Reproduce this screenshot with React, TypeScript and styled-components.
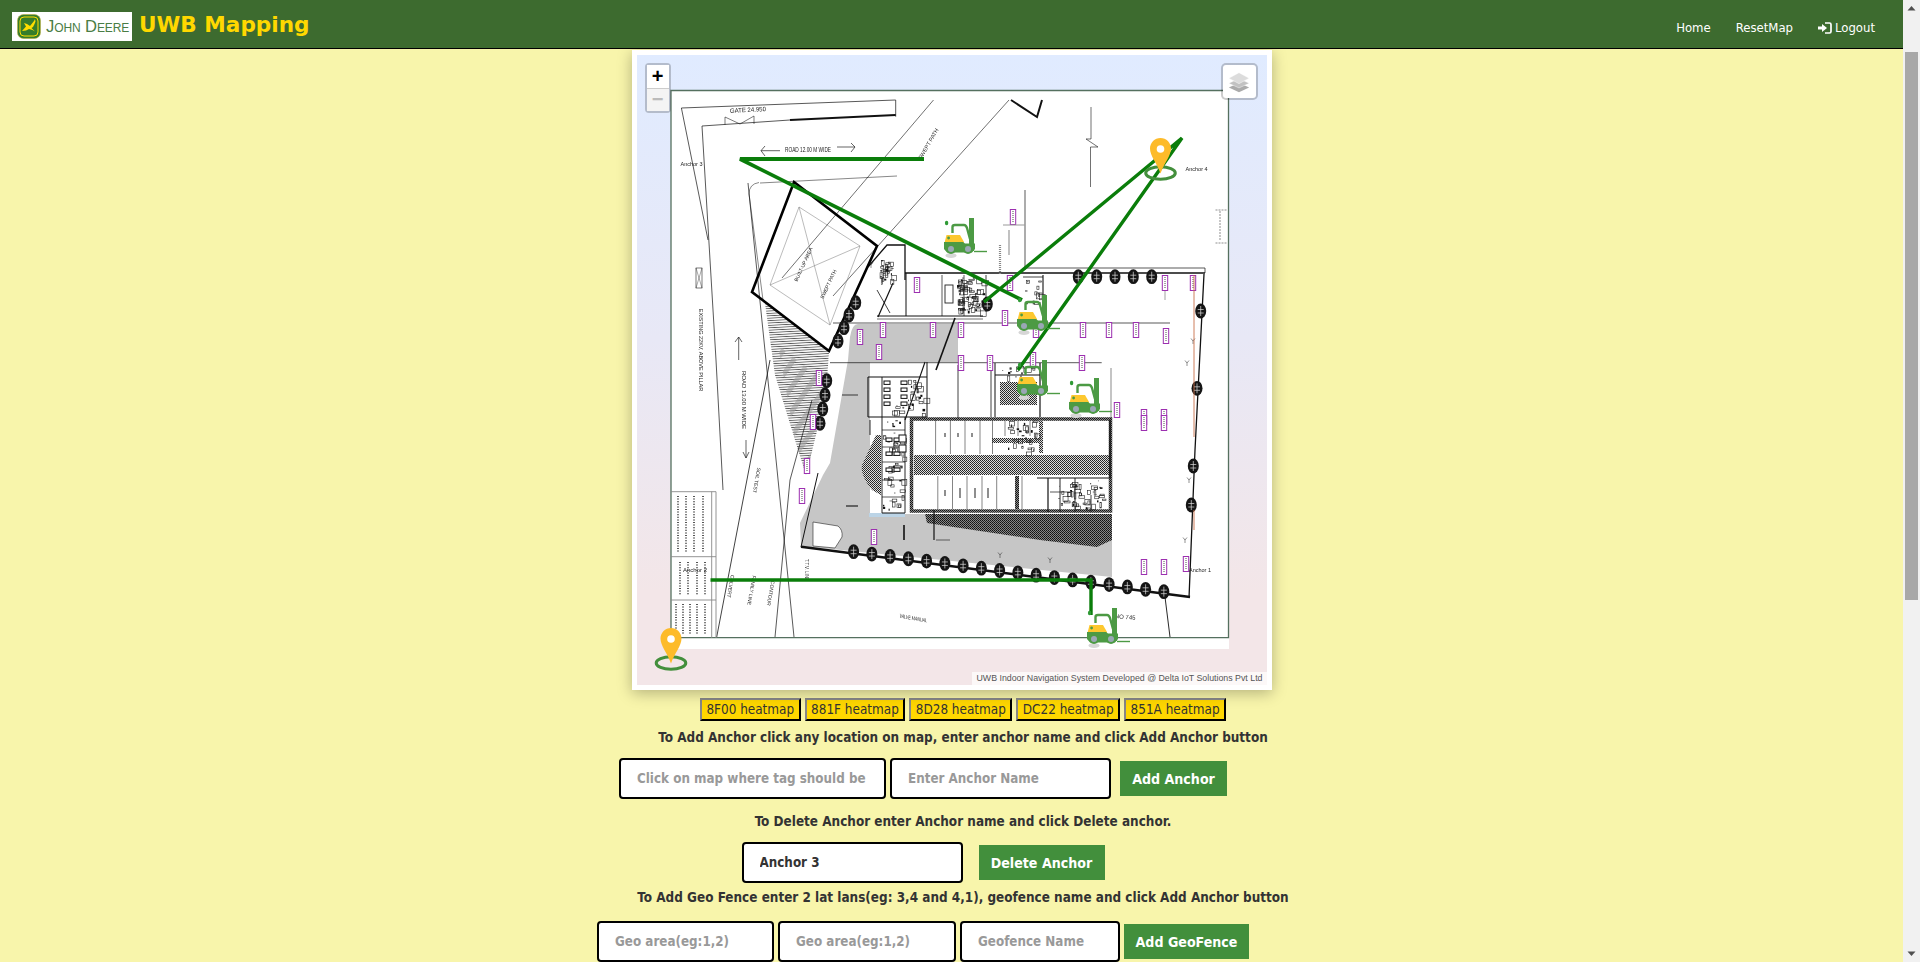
import React from "react";
import styled, { createGlobalStyle } from "styled-components";

const Global = createGlobalStyle`
  body { margin: 0; padding-right: 17px; background: #f8f5ab; font-family: "DejaVu Sans Condensed", "DejaVu Sans", sans-serif; color: #333; }
`;

const Scrollbar = styled.div`
  position: fixed; top: 0; right: 0; bottom: 0; width: 17px; z-index: 20; background: #f1f1f1;
  display: flex; flex-direction: column; align-items: center;
`;
const ScrollThumb = styled.div`
  width: 13px; height: 548px; margin-top: 35px; background: #a8a8a8;
`;
const ScrollArrow = styled.svg<{ $end?: boolean }>`
  display: block; width: 17px; height: 17px; flex: none; margin-top: ${p => (p.$end ? "auto" : "0")};
`;

const Nav = styled.nav`
  position: fixed; top: 0; left: 0; right: 17px; z-index: 10;
  height: 48px; border-bottom: 1px solid #000; background: #3d6b2f;
  display: flex; align-items: center; padding: 0 28px 0 12px;
`;
const Logo = styled.div`
  width: 120px; height: 29px; background: #fff; display: flex; align-items: center; gap: 5px; padding: 0 0 0 5px; box-sizing: border-box; margin-top: 5px;
`;
const LogoText = styled.span`
  font: 400 16.6px "Liberation Sans", sans-serif; font-variant: small-caps; color: #4a7d45; white-space: nowrap; letter-spacing: -0.1px;
`;
const Title = styled.h1`
  margin: 0 0 0 7px; font: 700 21.6px "DejaVu Sans", sans-serif; color: #ffd800;
`;
const NavLinks = styled.div`
  margin-left: auto; display: flex; gap: 25px; align-items: center; padding-top: 7px;
`;
const NavLink = styled.a`
  color: #fff; font-size: 13px; display: flex; align-items: center; gap: 3px;
`;

const Main = styled.main`
  box-sizing: border-box; min-height: 1568px; padding-top: 50px; display: flex; flex-direction: column; align-items: center;
`;
const MapCard = styled.div`
  position: relative; width: 630px; height: 630px; border: 5px solid #fff; box-shadow: 0 3px 14px rgba(0,0,0,.28);
  background: linear-gradient(#e0ebff, #e8e8f6 45%, #f3e6e8 85%); overflow: hidden;
`;
const MapSvg = styled.svg`
  display: block; width: 630px; height: 630px;
`;
const Plan = styled.g`
  filter: blur(0.35px);
`;
const ZoomBox = styled.div`
  position: absolute; left: 8px; top: 8px; width: 22px; border: 2px solid rgba(0,0,0,.2); border-radius: 4px; background: #fff; background-clip: padding-box;
`;
const ZoomBtn = styled.div<{ $off?: boolean }>`
  height: 22.5px; display: flex; align-items: center; justify-content: center; font: 700 20px "Liberation Sans", sans-serif;
  color: ${p => (p.$off ? "#bbb" : "#000")}; background: ${p => (p.$off ? "#f4f4f4" : "#fff")};
  border-top: ${p => (p.$off ? "1px solid #ccc" : "none")};
`;
const LayerBox = styled.div`
  position: absolute; right: 9px; top: 8px; width: 33px; height: 33px; border: 2px solid rgba(0,0,0,.2); border-radius: 5px; background: #fff; background-clip: padding-box;
  display: flex; align-items: center; justify-content: center;
`;
const Attribution = styled.div`
  position: absolute; right: 0; bottom: 0; padding: 0 4px; background: rgba(255,255,255,.7); color: #555;
  font: 8.8px/13px "Liberation Sans", sans-serif; white-space: nowrap;
`;

const HeatRow = styled.div`
  display: flex; gap: 4px; margin-top: 8px; padding-left: 23px;
`;
const HeatBtn = styled.button`
  height: 23px; padding: 0 4.5px; background: #ffd700; border: 2px outset #333; color: #333; font: 13.4px "DejaVu Sans Condensed", "DejaVu Sans", sans-serif; white-space: nowrap;
`;
const Hint = styled.p<{ $top: number }>`
  margin: ${p => p.$top}px 0 0; padding-left: 23px; height: 20px; line-height: 20px; font-weight: 700; font-size: 13.42px; white-space: nowrap;
`;
const FormRow = styled.div<{ $top: number; $gap: number }>`
  display: flex; align-items: center; gap: ${p => p.$gap}px; margin-top: ${p => p.$top}px; padding-right: 57px;
`;
const Field = styled.input<{ $w: number }>`
  box-sizing: border-box; width: ${p => p.$w}px; height: 41px; padding: 0 16px 1px; background: #fff; border: 2px solid #000; border-radius: 4px; outline: none;
  font: 700 13.3px "DejaVu Sans Condensed", "DejaVu Sans", sans-serif; color: #333;
  &::placeholder { color: #999; }
`;
const Action = styled.button<{ $w: number; $left: number }>`
  box-sizing: border-box; width: ${p => p.$w}px; height: 35px; margin-left: ${p => p.$left}px; padding: 0; border: none; background: #428f3c; color: #fff;
  font: 700 14.1px "DejaVu Sans Condensed", "DejaVu Sans", sans-serif;
`;

const ln = "#111";
type P = number[];
const pts = (a: P) => a.join(" ");
const black: [P, number][] = [
  [[681.4,108,895.7,100,895.7,116.7], .7],
  [[895.7,115,790,120], 1.8],
  [[790,120,702,126,716,360,723,490], .7],
  [[681.4,108,708,240], .7],
  [[933.5,100,782,278], .6],
  [[1009,100,833,296], .6],
  [[1011,100,1037,117,1042,100], 2],
  [[1091,107,1091,139,1086,139,1098,147,1090.5,147,1090.5,187], .6],
  [[1025,190,1025,270], .7],
  [[748,183,794,637], .7],
  [[716.7,637,770,360], .8],
  [[775,637,790,480,812,400], .7],
  [[760,183,897,176], .5],
  [[868,267,887,245,905,245,905,280], 1.3],
  [[877,290,890,313], .8],
  [[893,283,878,317], 1.2],
  [[877,316,983,316], 1],
  [[877,319,983,319], .6],
  [[905,273,1205,273], 1.6],
  [[1025,268,1205,268,1205,273], .7],
  [[1204,274,1195,450,1189,598], 1.3],
  [[801,546.7,1190,597], 2.6],
  [[818,473,801,547], 1],
  [[833,323,1170,323], .7],
  [[830,362.7,1101.7,362.7], .7],
  [[942,275,942,316], .7],
  [[906,273,906,316], 1],
  [[964,275,964,316], .7],
  [[986,275,986,312], .8],
  [[1043,275,1043,297], 1.1],
  [[1023,277,1043,277], .8],
  [[1040,363,1040,417], 1.2],
  [[995,375,1040,375], 1.2],
  [[995,363,995,417], 1],
  [[1165,275,1165,300], .4],
  [[1111,368,1111,420], .5],
  [[1165,597,1170,637], .9],
  [[925,362,905,420], 1.1],
  [[955,318,936,370], 1.6],
  [[868,377,927,377], 1.2],
  [[868,417,927,417], 1.2],
  [[868,377,868,417], 1.1],
  [[927,362,927,417], 1],
  [[958,365,958,418], .8],
  [[991,362,991,417], .8],
  [[882,377,882,513], .9],
  [[870,420,870,435], .9],
  [[882,513,905,513], 1],
  [[905,417,905,513], .9],
  [[934,510,934,540], 1.2],
  [[904,525,904,540], 1.6],
  [[1048,478,1048,512], 1.2],
  [[1060,478,1060,512], .9],
  [[1075,478,1075,512], .9],
  [[1110,420,1110,478], 1.4],
  [[1037,478,1110,478], 1],
  [[1050,492,1070,492], .7],
  [[1091,495,1091,512], .8],
  [[882,430,905,430], .7],
  [[882,447,905,447], .7],
  [[882,462,905,462], .7],
  [[882,480,905,480], .7],
  [[882,497,905,497], .7],
  [[842,395,858,395], .8],
  [[846,506,858,506], 1.1],
  [[936,540,950,540], .6],
];
const gates: [number, number][] = [[871,265],[1193,341],[1189,480],[1185,540],[1187,363],[1000,555],[1050,560]];
const trees: [number, number][] = [
  [855.7,302.7],[849,315],[844,327.7],[838,341],[826.7,380.7],[825,395],[822.7,409],[820,423.3],
  ...Array.from({ length: 18 }, (_, i) => [853.6 + i * 18.25, 551.7 + i * 2.35] as [number, number]),
  [1078.3,276.7],[1096.7,276.7],[1115,276.7],[1133.3,276.7],[1151.7,276.7],
  [1200.7,311],[1197,388.3],[1193.3,466],[1191.3,505],[987.3,304],
];
const tags: [number, number][] = [
  [1013,217],[917,285],[933,330],[961,330],[1005,318],[1010,283],[1036,330],[1083,330],[1109,330],[1136,330],
  [961,363],[990,363],[1082,363],[1117,410],[1144,417],[1164,417],[1033,360],[1165,283],[1193,283],[1166,336],
  [860,337],[883,330],[879,352],[819,378],[813,422],[807,466],[802,496],[874,537],
  [1144,567],[1164,567],[1186,564],[1144,423],[1164,423],
];
const forks: [number, number][] = [[944,218],[1017,295],[1017,360],[1069,378],[1087,608]];
const chairs: [number, number][] = [
  [884,381],[901,381],[884,388],[901,388],[884,395],[901,395],[884,402],[901,402],
  [886,438],[886,452],[886,468],[894,438],[894,452],[894,468],
];

function cluster(x: number, y: number, w: number, h: number, n: number, seed: number) {
  let s = seed;
  const r = () => ((s = (s * 16807) % 2147483647) / 2147483647);
  return Array.from({ length: n }, (_, i) => {
    const rx = x + r() * w, ry = y + r() * h, rw = 1 + r() * 5, rh = 1 + r() * 5;
    return i % 3 === 0
      ? <rect key={i} x={rx} y={ry} width={rw / 2.2} height={rh / 2.2} fill="#111" />
      : <rect key={i} x={rx} y={ry} width={rw} height={rh} fill="none" stroke="#222" strokeWidth=".6" />;
  });
}
const TinyText = styled.text`
  font-family: "Liberation Sans", sans-serif; fill: #222;
`;
const Note = ({ x, y, r = 0, s = 6, c, len }: { x: number; y: number; r?: number; s?: number; c: string; len?: number }) => (
  <TinyText x={x} y={y} fontSize={s} textAnchor="middle" textLength={len} lengthAdjust={len ? "spacingAndGlyphs" : undefined} transform={r ? `rotate(${r} ${x} ${y})` : undefined}>{c}</TinyText>
);

const Floorplan = () => (
  <Plan>
    <rect x="671" y="90" width="558" height="559" fill="#fff" />
    <path d="M671 90.5H1228.5V637.7H671Z" fill="none" stroke="#55705f" strokeWidth="1.3" />
    <path d="M858 324H958V362H870V514H1112V577L801 546L800 523L823 475L830 463L848 360L850 337Q852 324 858 324Z" fill="#c6c6c6" />
    <path d="M813 522L838 526Q843 530 842 537L835 548L813 546Z" fill="#fff" stroke="#222" strokeWidth=".6" />
    <path d="M765 303L829 351L826 395L806 475L795 440L775 375Z" fill="url(#stripes)" />
    <path d="M778 345L829 385L826 395L806 475L795 440Z" fill="url(#bands)" />
    <path d="M876 435L881 435V495L872 490Q860 475 862 465Z" fill="url(#dither)" />
    <path d="M925 514H1112V540L1097 547L1040 540L927 523Z" fill="url(#darkdither)" />
    <rect x="914" y="455" width="196" height="20" fill="url(#dither)" />
    <rect x="1000" y="382" width="37" height="23" fill="url(#dither)" />
    <rect x="992" y="438" width="48" height="5" fill="url(#dither)" />
    <rect x="1039" y="421" width="4" height="32" fill="url(#dither)" />
    <rect x="1015" y="476" width="4" height="33" fill="url(#darkdither)" />
    <rect x="911.5" y="419" width="199" height="92" fill="none" stroke="url(#darkdither)" strokeWidth="3.5" />
    <rect x="869" y="513" width="36" height="4" fill="#bcd4e6" />
    <path d="M935.6 420V454M950.4 420V454M965 420V454M980 420V454M992.5 420V454M1005 421V436M1018 421V436M1030 421V436M937.8 476V509M952.5 476V509M967 476V509M982 476V509M996.7 476V509M1022 476V509" stroke="#333" strokeWidth=".6" />
    <path d="M945 433V437M958 433V437M972 433V437M945 490V496M960 488V498M975 488V498M988 488V498" stroke="#444" strokeWidth="1.2" />
    {black.map(([p, w], i) => <polyline key={i} points={pts(p)} fill="none" stroke={ln} strokeWidth={w} />)}
    <polygon points="794,182 877,246 829,351 752,292" fill="none" stroke="#000" strokeWidth="2.6" />
    <path d="M799 207L860 246L830 325L770 285ZM799 207L830 325M860 246L770 285" fill="none" stroke="#777" strokeWidth=".5" />
    <path d="M759 182.5Q749 184 749 194L763 300" fill="none" stroke="#111" strokeWidth=".5" />
    {cluster(957, 277, 26, 34, 80, 17)}
    {cluster(880, 260, 12, 20, 28, 29)}
    {cluster(1008, 420, 28, 32, 30, 113)}
    {cluster(1058, 480, 46, 28, 50, 157)}
    {cluster(1025, 280, 15, 24, 14, 201)}
    {cluster(883, 405, 20, 105, 50, 91)}
    {cluster(908, 378, 16, 36, 20, 73)}
    {cluster(1002, 365, 34, 12, 14, 277)}
    {chairs.map(([x, y], i) => <rect key={i} x={x} y={y} width="6" height="3.4" fill="#fff" stroke="#111" strokeWidth="1" />)}
    <rect x="945" y="285" width="8" height="18" fill="#fff" stroke="#222" strokeWidth=".9" />
    <rect x="899" y="435" width="7" height="7" fill="#fff" stroke="#111" strokeWidth="1" />
    <rect x="899" y="445" width="7" height="7" fill="#fff" stroke="#111" strokeWidth="1" />
    <rect x="696" y="268" width="6" height="20" fill="#fff" stroke="#222" strokeWidth=".6" />
    <path d="M696 268L702 288M702 268L696 288" stroke="#222" strokeWidth=".4" />
    <path d="M671 491.7H716M671 556.7H716M671 600H716M711.7 491.7V638M716 491.7V638" stroke="#888" strokeWidth=".9" fill="none" />
    <path d="M678 496V552M686 496V552M694 496V552M703 496V552M680 562V595M688 562V595M697 562V595M705 562V595M676 604V634M683 604V634M690 604V634M697 604V634M705 604V634" stroke="#555" strokeWidth="2" strokeDasharray="1 1.6" />
    {gates.map(([x, y], i) => <path key={i} d={`M${x - 2} ${y - 2.5}L${x} ${y}L${x + 2} ${y - 2.5}M${x} ${y}V${y + 3}`} stroke="#222" strokeWidth=".5" fill="none" />)}
    {trees.map(([x, y], i) => (
      <g key={i}>
        <ellipse cx={x} cy={y} rx="5.5" ry="7.4" fill="#151515" />
        <path d={`M${x - 3} ${y - 1.5}H${x + 3}M${x - 3} ${y + 2}H${x + 3}M${x} ${y - 5}V${y + 5}`} stroke="#ddd" strokeWidth=".7" />
      </g>
    ))}
    {tags.map(([x, y], i) => (
      <g key={i}>
        <rect x={x - 2.7} y={y - 7.5} width="5.4" height="15" fill="#fff" stroke="#9c2fb0" strokeWidth="1" />
        <path d={`M${x} ${y - 6}V${y + 6}`} stroke="#777" strokeWidth="1.3" strokeDasharray="1 1" />
      </g>
    ))}
    <path d="M1194 275V437M1194 510V530" stroke="#c8704a" strokeWidth=".9" />
    <path d="M761 150.7H780M761 150.7L765 146M761 150.7L765 156M837 147H855M855 147L851 143M855 147L851 152M738.7 337V360M738.7 337L735 342M738.7 337L742 342M746 440V458M746 458L743 452M746 458L749 452" stroke="#222" strokeWidth=".7" fill="none" />
    <path d="M725 117L740 124L754 116M725 117V125M754 116V124" stroke="#222" strokeWidth=".6" fill="none" />
    <path d="M1215.5 210H1227M1215.5 243H1227M1220 211V240" stroke="#444" strokeWidth=".6" strokeDasharray="2 1" fill="none" />
    <path d="M1000 245V275" stroke="#888" strokeWidth="2.2" strokeDasharray="1 1" />
    <path d="M1003 225H1025M1009 230V255" stroke="#999" strokeWidth="1.2" />
    <Note x={748} y={112} s={6.4} r={-3} len={36} c="GATE 24.950" />
    <Note x={808} y={152} s={6.5} len={46} c="ROAD 12.00 M WIDE" />
    <Note x={691.5} y={166} s={5.5} c="Anchor 3" />
    <Note x={1196.6} y={171} s={5.5} c="Anchor 4" />
    <Note x={1200} y={572} s={5.5} c="Anchor 1" />
    <Note x={695} y={572} s={6} c="Anchor 2" />
    <Note x={930} y={145} s={5.5} r={-60} c="SWEPT PATH" />
    <Note x={742} y={400} s={6} r={90} c="ROAD 13.00 M WIDE" />
    <Note x={699} y={350} s={5.5} r={90} c="EXISTING 22KV, ABOVE PILLAR" />
    <Note x={805} y={265} s={5} r={-65} c="BUILT-UP AREA" />
    <Note x={830} y={285} s={5} r={-65} c="SWEPT PATH" />
    <Note x={755} y={480} s={5} r={100} c="SOIL TEST" />
    <Note x={729} y={586} s={5} r={100} c="CULVERT" />
    <Note x={750} y={590} s={5} r={100} c="FAMILY LINE" />
    <Note x={769} y={593} s={5} r={100} c="CONTOUR" />
    <Note x={805} y={570} s={4.5} r={90} c="T.T.V. LINE" />
    <Note x={913} y={620} s={5.5} r={10} len={28} c="VALVE MANUAL" />
    <Note x={1125} y={619} s={6} r={5} c="NO 745" />
  </Plan>
);

const Forklift = () => (
  <symbol id="fork" viewBox="0 0 43 40" width="43" height="40" overflow="visible">
    <ellipse cx="7" cy="37.5" rx="5.5" ry="2.6" fill="#d6d6d6" />
    <ellipse cx="2.6" cy="5" rx="1.7" ry="2.3" fill="#2f9a35" />
    <path d="M8.5 15V9Q8.5 7 11 7H20Q22 7 23 10L26 21" fill="none" stroke="#4c9a44" strokeWidth="2.4" />
    <rect x="25" y="0" width="5" height="33" fill="#4c9a44" />
    <path d="M0.5 25L2.5 17H16L20 24V27H0.5Z" fill="#fdc82f" />
    <path d="M0 24H19L21 25.5H31V31L28 34.5H3L0 31Z" fill="#4c9a44" />
    <circle cx="4.6" cy="20" r="1.4" fill="#4c9a44" />
    <circle cx="7" cy="31" r="5" fill="#4c9a44" />
    <circle cx="7" cy="31" r="3" fill="#9aa7b5" />
    <circle cx="24" cy="31" r="5" fill="#4c9a44" />
    <circle cx="24" cy="31" r="3" fill="#9aa7b5" />
    <path d="M30 33.5H43" stroke="#4c9a44" strokeWidth="1.4" />
  </symbol>
);

const Pin = ({ x, y }: { x: number; y: number }) => (
  <g transform={`translate(${x} ${y})`}>
    <ellipse cx="10.5" cy="35" rx="14.8" ry="6.3" fill="none" stroke="#438f3c" strokeWidth="3" />
    <path d="M10.5 0C4.7 0 0 4.7 0 10.5C0 18 7 25 10.5 35.5C14 25 21 18 21 10.5C21 4.7 16.3 0 10.5 0Z" fill="#fdbb2a" />
    <circle cx="10.5" cy="11" r="3.8" fill="#fff" />
  </g>
);

const LogoutIcon = () => (
  <svg width="14" height="12" viewBox="0 0 14 12">
    <path d="M7 1H11.5Q13 1 13 2.5V9.5Q13 11 11.5 11H7" fill="none" stroke="#fff" strokeWidth="1.7" />
    <path d="M0 4.5H4V2L9 6L4 10V7.5H0Z" fill="#fff" />
  </svg>
);

const Deere = () => (
  <svg width="24" height="25" viewBox="0 0 24 25">
    <rect x="0.5" y="0.5" width="23" height="24" rx="6" fill="#367c2b" stroke="#bcae3f" strokeWidth=".6" />
    <rect x="3" y="3" width="18" height="19" rx="4" fill="none" stroke="#ffde00" strokeWidth="1" />
    <path d="M5 17L9 12.5L7 9L10 10L13 12L17 7L18 5L18.5 7.5L17.5 10L16 13L14.5 14L18 17.5L15.5 16L12 15L9 16.5Z" fill="#ffde00" />
  </svg>
);

const Layers = () => (
  <svg width="22" height="22" viewBox="0 0 26 26">
    <path d="M13 14L25 19.5L13 25L1 19.5Z" fill="#ababab" />
    <path d="M13 9L25 14.5L13 20L1 14.5Z" fill="#c2c2c2" stroke="#fff" strokeWidth=".5" />
    <path d="M13 2L25 8.5L13 15L1 8.5Z" fill="#dcdcdc" stroke="#fff" strokeWidth=".5" />
  </svg>
);

export default function App() {
  return (
    <>
      <Global />
      <Nav>
        <Logo>
          <Deere />
          <LogoText>John Deere</LogoText>
        </Logo>
        <Title>UWB Mapping</Title>
        <NavLinks>
          <NavLink>Home</NavLink>
          <NavLink>ResetMap</NavLink>
          <NavLink><LogoutIcon />Logout</NavLink>
        </NavLinks>
      </Nav>
      <Scrollbar>
        <ScrollArrow viewBox="0 0 17 17"><path d="M8.5 6L12.5 10.5H4.5Z" fill="#505050" /></ScrollArrow>
        <ScrollThumb />
        <ScrollArrow $end viewBox="0 0 17 17"><path d="M8.5 11L12.5 6.5H4.5Z" fill="#505050" /></ScrollArrow>
      </Scrollbar>
      <Main>
        <MapCard>
          <MapSvg viewBox="637 55 630 630">
            <defs>
              <Forklift />
              <pattern id="dither" width="2" height="2" patternUnits="userSpaceOnUse">
                <rect width="2" height="2" fill="#ddd" />
                <rect width="1" height="1" fill="#222" />
                <rect x="1" y="1" width="1" height="1" fill="#333" />
              </pattern>
              <pattern id="darkdither" width="2" height="2" patternUnits="userSpaceOnUse">
                <rect width="2" height="2" fill="#888" />
                <rect width="1" height="1" fill="#111" />
                <rect x="1" y="1" width="1" height="1" fill="#222" />
              </pattern>
              <pattern id="stripes" width="6" height="2.4" patternUnits="userSpaceOnUse" patternTransform="rotate(-3)">
                <rect width="6" height="2.4" fill="#f4f4f4" />
                <rect width="6" height=".7" fill="#444" />
              </pattern>
              <pattern id="bands" width="14" height="14" patternUnits="userSpaceOnUse" patternTransform="rotate(35)">
                <rect x="0" width="5" height="14" fill="#999" fillOpacity=".55" />
              </pattern>
            </defs>
            <Floorplan />
            <polyline points="924,159 740,159 1022,300" fill="none" stroke="#0a7d0a" strokeWidth="3.8" />
            <polyline points="984,302 1182,138 1018,370" fill="none" stroke="#0a7d0a" strokeWidth="3.4" />
            <polyline points="710.5,580 1091,580 1091,615" fill="none" stroke="#0a7d0a" strokeWidth="3.4" />
            {forks.map(([x, y], i) => <use key={i} href="#fork" x={x} y={y} width="43" height="40" />)}
            <Pin x={1150} y={138} />
            <Pin x={660.5} y={628} />
          </MapSvg>
          <ZoomBox>
            <ZoomBtn>+</ZoomBtn>
            <ZoomBtn $off>−</ZoomBtn>
          </ZoomBox>
          <LayerBox><Layers /></LayerBox>
          <Attribution>UWB Indoor Navigation System Developed @ Delta IoT Solutions Pvt Ltd</Attribution>
        </MapCard>
        <HeatRow>
          <HeatBtn>8F00 heatmap</HeatBtn>
          <HeatBtn>881F heatmap</HeatBtn>
          <HeatBtn>8D28 heatmap</HeatBtn>
          <HeatBtn>DC22 heatmap</HeatBtn>
          <HeatBtn>851A heatmap</HeatBtn>
        </HeatRow>
        <Hint $top={7}>To Add Anchor click any location on map, enter anchor name and click Add Anchor button</Hint>
        <FormRow $top={10} $gap={4}>
          <Field $w={267} placeholder="Click on map where tag should be" />
          <Field $w={221} placeholder="Enter Anchor Name" />
          <Action $w={107} $left={5}>Add Anchor</Action>
        </FormRow>
        <Hint $top={13}>To Delete Anchor enter Anchor name and click Delete anchor.</Hint>
        <FormRow $top={10} $gap={16}>
          <Field $w={221} defaultValue="Anchor 3" />
          <Action $w={126} $left={0}>Delete Anchor</Action>
        </FormRow>
        <Hint $top={5}>To Add Geo Fence enter 2 lat lans(eg: 3,4 and 4,1), geofence name and click Add Anchor button</Hint>
        <FormRow $top={13} $gap={4}>
          <Field $w={177} placeholder="Geo area(eg:1,2)" />
          <Field $w={178} placeholder="Geo area(eg:1,2)" />
          <Field $w={160} placeholder="Geofence Name" />
          <Action $w={125} $left={0}>Add GeoFence</Action>
        </FormRow>
      </Main>
    </>
  );
}
